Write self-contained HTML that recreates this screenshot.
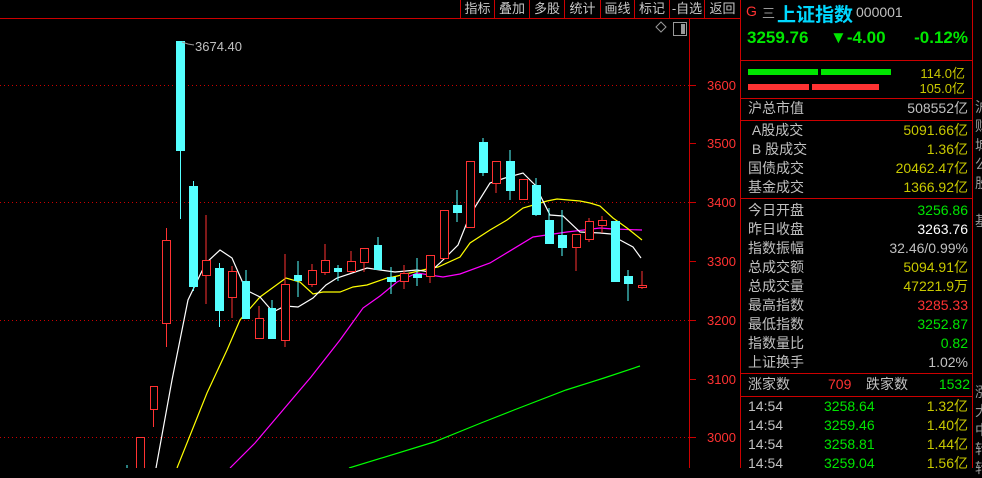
<!DOCTYPE html>
<html><head><meta charset="utf-8"><style>
*{margin:0;padding:0;box-sizing:border-box}
body{width:982px;height:468px;background:#000;overflow:hidden;position:relative;font-family:"Liberation Sans","Noto Sans CJK SC",sans-serif;color:#c0c0c0}
.a{position:absolute;white-space:nowrap}
.tb{position:absolute;top:0;height:18px;font-size:13px;line-height:17px;color:#c8c8c8;text-align:center;border-left:1px solid #c00}
.r{position:absolute;left:748px;width:220px;font-size:14px;line-height:19px;height:19px}
.r span{position:absolute;right:0}
.g{color:#00e600}.y{color:#c8c800}.rd{color:#ff3232}.w{color:#fff}
</style></head><body>
<svg class="a" style="left:0;top:0" width="740" height="468">
<line x1="0" y1="18.5" x2="740" y2="18.5" stroke="#c00"/>
<line x1="689.5" y1="18" x2="689.5" y2="468" stroke="#c00"/>
<g stroke="#c00" stroke-dasharray="1 3">
<line x1="0" y1="85.5" x2="689" y2="85.5"/><line x1="0" y1="202.5" x2="689" y2="202.5"/><line x1="0" y1="320.5" x2="689" y2="320.5"/><line x1="0" y1="437.5" x2="689" y2="437.5"/></g>
<g stroke="#c00"><line x1="689" y1="85.5" x2="696" y2="85.5"/><line x1="689" y1="143.5" x2="696" y2="143.5"/><line x1="689" y1="202.5" x2="696" y2="202.5"/><line x1="689" y1="261.5" x2="696" y2="261.5"/><line x1="689" y1="320.5" x2="696" y2="320.5"/><line x1="689" y1="379.5" x2="696" y2="379.5"/><line x1="689" y1="437.5" x2="696" y2="437.5"/></g>
<g fill="#ff3232" font-size="13" font-family="Liberation Sans">
<text x="707" y="90">3600</text><text x="707" y="148">3500</text><text x="707" y="207">3400</text><text x="707" y="266">3300</text><text x="707" y="325">3200</text><text x="707" y="384">3100</text><text x="707" y="442">3000</text></g>
<g fill="none" stroke-width="1.2">
<polyline stroke="#00ff00" points="349,468 434,442 481,423 514,410 566,390 604,378 640,366"/>
<polyline stroke="#ff00ff" points="230,468 255,443 283,410 311,377 340,340 363,308 380,296 397,282 417,273 443,277 460,274 490,263 533,237 567,232 600,228 613,229 642,230"/>
<polyline stroke="#ffff00" points="177,468 191,433 207,393 227,350 240,320 260,297 286,278 300,282 313,294 323,292 340,292 353,287 367,285 387,278 393,277 427,269 438,267 460,257 470,243 490,230 507,220 523,208 547,201 557,199 580,201 590,203 600,206 613,218 627,228 642,240"/>
<polyline stroke="#ffffff" points="156,468 172,380 178,350 188,300 200,275 206,263 220,250 232,258 246,290 260,297 273,312 285,306 298,307 313,298 326,285 337,278 367,268 380,270 395,272 417,270 430,272 440,263 458,245 470,215 490,183 505,178 523,173 535,185 550,215 563,216 580,232 600,233 611,234 620,240 633,247 641,258"/>
</g>
<g stroke="#ff3232" fill="#000">
<line x1="140" y1="437" x2="140" y2="468"/><rect x="136.5" y="437.5" width="8" height="40"/>
<line x1="153.5" y1="386" x2="153.5" y2="427"/><rect x="150.5" y="386.5" width="7" height="23"/>
<line x1="166.5" y1="228" x2="166.5" y2="347"/><rect x="162.5" y="240.5" width="8" height="83"/>
<line x1="206" y1="215" x2="206" y2="304"/><rect x="202.5" y="260.5" width="8" height="15"/>
<line x1="232" y1="266" x2="232" y2="318"/><rect x="228.5" y="271.5" width="8" height="26"/>
<line x1="259" y1="306" x2="259" y2="338"/><rect x="255.5" y="318.5" width="8" height="20"/>
<line x1="285" y1="254" x2="285" y2="347"/><rect x="281.5" y="284.5" width="8" height="56"/>
<line x1="312" y1="264" x2="312" y2="287"/><rect x="308.5" y="270.5" width="8" height="14"/>
<line x1="325" y1="244" x2="325" y2="275"/><rect x="321.5" y="260.5" width="8" height="12"/>
<line x1="351" y1="251" x2="351" y2="273"/><rect x="347.5" y="261.5" width="8" height="10"/>
<line x1="364" y1="248" x2="364" y2="272"/><rect x="360.5" y="248.5" width="8" height="14"/>
<line x1="404" y1="265" x2="404" y2="289"/><rect x="400.5" y="273.5" width="8" height="8"/>
<line x1="430" y1="255" x2="430" y2="283"/><rect x="426.5" y="255.5" width="8" height="21"/>
<line x1="444" y1="210" x2="444" y2="258"/><rect x="440.5" y="210.5" width="8" height="48"/>
<line x1="470" y1="161" x2="470" y2="227"/><rect x="466.5" y="161.5" width="8" height="66"/>
<line x1="496" y1="161" x2="496" y2="193"/><rect x="492.5" y="161.5" width="8" height="22"/>
<line x1="523" y1="179" x2="523" y2="199"/><rect x="519.5" y="179.5" width="8" height="20"/>
<line x1="576" y1="234" x2="576" y2="271"/><rect x="572.5" y="234.5" width="8" height="13"/>
<line x1="589" y1="218" x2="589" y2="242"/><rect x="585.5" y="221.5" width="8" height="18"/>
<line x1="602" y1="216" x2="602" y2="233"/><rect x="598.5" y="220.5" width="8" height="5"/>
<line x1="642" y1="271" x2="642" y2="289"/><rect x="638.5" y="285.5" width="8" height="2"/>
</g>
<g stroke="#55ffff" fill="#55ffff">
<line x1="127" y1="465" x2="127" y2="468"/>
<line x1="180.5" y1="41" x2="180.5" y2="219"/><rect x="176.5" y="41.5" width="8" height="109"/>
<line x1="193.5" y1="181" x2="193.5" y2="291"/><rect x="189.5" y="186.5" width="8" height="100"/>
<line x1="219.5" y1="263" x2="219.5" y2="327"/><rect x="215.5" y="268.5" width="8" height="42"/>
<line x1="246" y1="270" x2="246" y2="318"/><rect x="242.5" y="281.5" width="7" height="37"/>
<line x1="272" y1="300" x2="272" y2="338"/><rect x="268.5" y="308.5" width="7" height="30"/>
<line x1="298" y1="261" x2="298" y2="297"/><rect x="294.5" y="275.5" width="7" height="5"/>
<line x1="338" y1="265" x2="338" y2="281"/><rect x="334.5" y="268.5" width="7" height="3"/>
<line x1="378" y1="237" x2="378" y2="270"/><rect x="374.5" y="245.5" width="7" height="24"/>
<line x1="391" y1="267" x2="391" y2="294"/><rect x="387.5" y="277.5" width="8" height="4"/>
<line x1="417" y1="258" x2="417" y2="286"/><rect x="413.5" y="274.5" width="8" height="3"/>
<line x1="457" y1="190" x2="457" y2="222"/><rect x="453.5" y="205.5" width="8" height="7"/>
<line x1="483" y1="138" x2="483" y2="176"/><rect x="479.5" y="142.5" width="8" height="30"/>
<line x1="510" y1="150" x2="510" y2="200"/><rect x="506.5" y="161.5" width="8" height="29"/>
<line x1="536" y1="178" x2="536" y2="216"/><rect x="532.5" y="185.5" width="8" height="29"/>
<line x1="549" y1="208" x2="549" y2="243"/><rect x="545.5" y="220.5" width="8" height="23"/>
<line x1="562" y1="210" x2="562" y2="256"/><rect x="558.5" y="235.5" width="8" height="12"/>
<line x1="615" y1="221" x2="615" y2="281"/><rect x="611.5" y="221.5" width="8" height="60"/>
<line x1="628" y1="270" x2="628" y2="301"/><rect x="624.5" y="276.5" width="8" height="7"/>
</g>
<polyline points="182,42 188,44 194,45" fill="none" stroke="#999"/>
<text x="195" y="51" fill="#c0c0c0" font-size="13" font-family="Liberation Sans">3674.40</text>
<path d="M661 22 L666 27 L661 32 L656 27 Z" fill="none" stroke="#999"/>
<rect x="673.5" y="22.5" width="13" height="13" fill="none" stroke="#999"/><rect x="681" y="24" width="4" height="10" fill="#999"/>
</svg>
<div class="tb" style="left:460px;width:34px">指标</div>
<div class="tb" style="left:494px;width:35px">叠加</div>
<div class="tb" style="left:529px;width:35px">多股</div>
<div class="tb" style="left:564px;width:36px">统计</div>
<div class="tb" style="left:600px;width:34px">画线</div>
<div class="tb" style="left:634px;width:35px">标记</div>
<div class="tb" style="left:669px;width:35px">-自选</div>
<div class="tb" style="left:704px;width:36px">返回</div>
<div class="a" style="left:740px;top:0;width:233px;height:468px;border-left:1px solid #c00;border-right:1px solid #c00"></div>
<div class="a" style="left:740px;top:60px;width:233px;border-top:1px solid #c00"></div>
<div class="a" style="left:740px;top:98px;width:233px;border-top:1px solid #c00"></div>
<div class="a" style="left:740px;top:120px;width:233px;border-top:1px solid #c00"></div>
<div class="a" style="left:740px;top:198px;width:233px;border-top:1px solid #c00"></div>
<div class="a" style="left:740px;top:373px;width:233px;border-top:1px solid #c00"></div>
<div class="a" style="left:740px;top:396px;width:233px;border-top:1px solid #c00"></div>
<div class="a" style="left:975px;top:98px;font-size:14px;line-height:19px;color:#999;white-space:normal;width:20px">沪<br>财<br>城<br>公<br>股<br>&nbsp;<br>基<br>&nbsp;<br>&nbsp;<br>&nbsp;<br>&nbsp;<br>&nbsp;<br>&nbsp;<br>&nbsp;<br>&nbsp;<br>涨<br>大<br>中<br>转<br>转</div>
<div class="a rd" style="left:746px;top:3px;font-size:14px">G</div>
<div class="a" style="left:762px;top:3px;font-size:13px;color:#999">三</div>
<div class="a" style="left:777px;top:0px;font-size:19px;font-weight:bold;color:#00d8ff">上证指数</div>
<div class="a" style="left:856px;top:4px;font-size:14px;color:#c0c0c0">000001</div>
<div class="a g" style="left:747px;top:28px;font-size:17px;font-weight:bold">3259.76</div>
<div class="a g" style="left:830px;top:28px;font-size:17px;font-weight:bold">▼-4.00</div>
<div class="a g" style="left:898px;width:70px;top:28px;font-size:17px;font-weight:bold;text-align:right">-0.12%</div>
<div class="a" style="left:748px;top:69px;width:70px;height:6px;background:#00e600"></div>
<div class="a" style="left:821px;top:69px;width:70px;height:6px;background:#00e600"></div>
<div class="a" style="left:748px;top:84px;width:61px;height:6px;background:#ff3232"></div>
<div class="a" style="left:812px;top:84px;width:67px;height:6px;background:#ff3232"></div>
<div class="a y" style="left:900px;width:65px;top:63px;font-size:13px;text-align:right">114.0亿</div>
<div class="a y" style="left:900px;width:65px;top:78px;font-size:13px;text-align:right">105.0亿</div>
<div class="r" style="top:99px">沪总市值<span>508552亿</span></div>
<div class="r" style="top:121px">&nbsp;A股成交<span class="y">5091.66亿</span></div>
<div class="r" style="top:140px">&nbsp;B 股成交<span class="y">1.36亿</span></div>
<div class="r" style="top:159px">国债成交<span class="y">20462.47亿</span></div>
<div class="r" style="top:178px">基金成交<span class="y">1366.92亿</span></div>
<div class="r" style="top:201px">今日开盘<span class="g">3256.86</span></div>
<div class="r" style="top:220px">昨日收盘<span class="w">3263.76</span></div>
<div class="r" style="top:239px">指数振幅<span>32.46/0.99%</span></div>
<div class="r" style="top:258px">总成交额<span class="y">5094.91亿</span></div>
<div class="r" style="top:277px">总成交量<span class="y">47221.9万</span></div>
<div class="r" style="top:296px">最高指数<span class="rd">3285.33</span></div>
<div class="r" style="top:315px">最低指数<span class="g">3252.87</span></div>
<div class="r" style="top:334px">指数量比<span class="g">0.82</span></div>
<div class="r" style="top:353px">上证换手<span>1.02%</span></div>
<div class="r" style="top:375px">涨家数<b class="a rd" style="left:80px;font-weight:normal">709</b><b class="a" style="left:118px;font-weight:normal">跌家数</b><span class="g" style="right:-2px">1532</span></div>
<div class="r" style="top:397px">14:54<b class="a g" style="left:76px;font-weight:normal">3258.64</b><span class="y">1.32亿</span></div>
<div class="r" style="top:416px">14:54<b class="a g" style="left:76px;font-weight:normal">3259.46</b><span class="y">1.40亿</span></div>
<div class="r" style="top:435px">14:54<b class="a g" style="left:76px;font-weight:normal">3258.81</b><span class="y">1.44亿</span></div>
<div class="r" style="top:454px">14:54<b class="a g" style="left:76px;font-weight:normal">3259.04</b><span class="y">1.56亿</span></div>
</body></html>
